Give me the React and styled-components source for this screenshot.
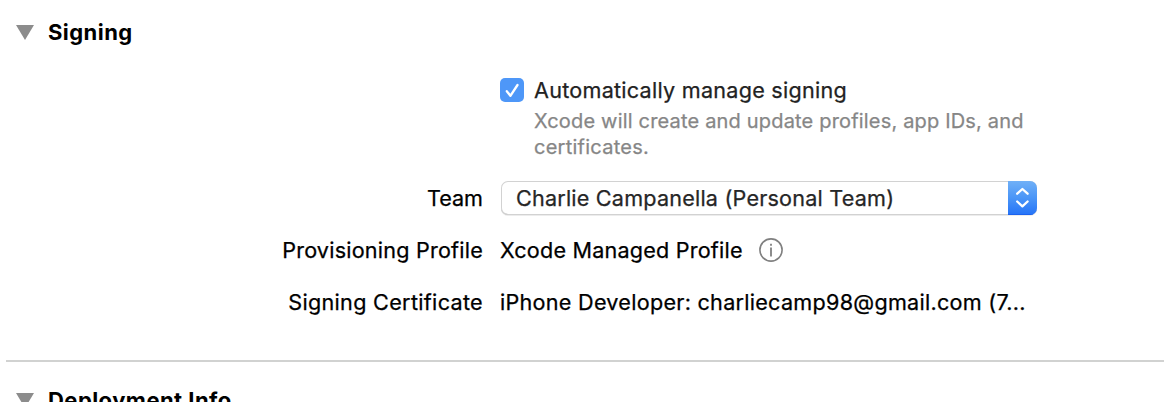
import React from "react";
import styled, { createGlobalStyle } from "styled-components";

const GlobalStyle = createGlobalStyle`
  * { box-sizing: border-box; }
  html, body { margin: 0; height: 402px; overflow: hidden; background: #fff; }
  body { font-family: Inter, "Liberation Sans", sans-serif; font-size: 21.6px; line-height: 26px; color: #000; }
`;

const Panel = styled.main`
  height: 402px;
  overflow: hidden;
  padding-left: 6px;
`;

const Header = styled.header`
  display: flex;
  align-items: center;
  gap: 14px;
  height: 26px;
  margin: ${(p) => p.$top}px 0 0 10px;
`;

const Title = styled.h2`
  margin: 0;
  font-size: 22px;
  font-weight: 700;
  line-height: 26px;
  white-space: nowrap;
  letter-spacing: 0.45px;
`;

const Disclosure = styled.svg`
  width: 18px;
  height: 15px;
  flex: none;
  fill: #8c8c8c;
`;

const Text = styled.span`
  display: block;
  white-space: nowrap;
  -webkit-text-stroke: 0.25px currentColor;
  color: ${(p) => p.$color || "#000"};
  letter-spacing: ${(p) => p.$tracking || 0}px;
`;

const Form = styled.div`
  padding: 32px 0;
`;

const AutoRow = styled.div`
  display: flex;
  gap: 10px;
  padding-left: 494px;
  margin-bottom: 12px;
`;

const Checkbox = styled.span`
  display: flex;
  width: 24px;
  height: 24px;
  margin-top: 1px;
  border-radius: 5px;
  background: #4e97f8;
`;

const Hint = styled.div`
  margin-top: 5px;
  font-size: 20px;
`;

const Row = styled.div`
  display: grid;
  grid-template-columns: 477px 537px;
  column-gap: 17px;
  align-items: center;
  height: 52px;
`;

const Label = styled.div`
  display: flex;
  justify-content: flex-end;
`;

const Value = styled.div`
  display: flex;
  align-items: center;
  gap: 16px;
`;

const Select = styled.div`
  display: flex;
  flex: 1;
  justify-content: space-between;
  align-items: center;
  height: 34px;
  margin-left: 1px;
  padding-left: 15px;
  border-radius: 7px;
  background: #fff;
  box-shadow: inset 0 0 0 1px #d2d2d2, inset 0 -1px 0 #b9b9b9, 0 1px 0 #ececec;
  overflow: hidden;
`;

const Stepper = styled.span`
  display: flex;
  width: 29px;
  height: 34px;
  background: linear-gradient(#70b0f7, #4a95f7 50%, #2573f8);
  box-shadow: inset 0 -1px 0 #1c62ee;
`;

const Divider = styled.hr`
  height: 2px;
  margin: 0;
  border: 0;
  background: #d1d2d1;
`;

function Section({ title, top }) {
  return (
    <Header $top={top}>
      <Disclosure viewBox="0 0 18 15"><path d="M0 0H18L9 15Z" /></Disclosure>
      <Title>{title}</Title>
    </Header>
  );
}

export default function App() {
  return (
    <Panel>
      <GlobalStyle />
      <Section title="Signing" top={19} />
      <Form>
        <AutoRow>
          <Checkbox>
            <svg width="24" height="24" viewBox="0 0 24 24" fill="none" stroke="#fff" strokeWidth="2.3" strokeLinecap="round" strokeLinejoin="round">
              <path d="M6.8 13.2L10.4 17.8L17.5 7" />
            </svg>
          </Checkbox>
          <div>
            <Text $color="#222" $tracking={0.25}>Automatically manage signing</Text>
            <Hint>
              <Text $color="#868686" $tracking={0.18}>Xcode will create and update profiles, app IDs, and</Text>
              <Text $color="#868686" $tracking={0.25}>certificates.</Text>
            </Hint>
          </div>
        </AutoRow>
        <Row>
          <Label><Text>Team</Text></Label>
          <Value>
            <Select>
              <Text $color="#262626" $tracking={0.2}>Charlie Campanella (Personal Team)</Text>
              <Stepper>
                <svg width="29" height="34" viewBox="0 0 29 34" fill="none" stroke="#fff" strokeWidth="2.3" strokeLinecap="round" strokeLinejoin="round">
                  <path d="M9.2 12.7L14.4 8L19.6 12.7M9.2 20.5L14.4 25.3L19.6 20.5" />
                </svg>
              </Stepper>
            </Select>
          </Value>
        </Row>
        <Row>
          <Label><Text $tracking={0.21}>Provisioning Profile</Text></Label>
          <Value>
            <Text $tracking={0.2}>Xcode Managed Profile</Text>
            <svg width="24" height="24" viewBox="0 0 24 24" fill="none" stroke="#808080">
              <circle cx="12" cy="12" r="11.1" strokeWidth="1.6" />
              <path d="M12 9.5V18.5M12 5.7V7.7" strokeWidth="1.8" />
            </svg>
          </Value>
        </Row>
        <Row>
          <Label><Text $tracking={0.31}>Signing Certificate</Text></Label>
          <Value><Text $tracking={0.27}>iPhone Developer: charliecamp98@gmail.com (7...</Text></Value>
        </Row>
      </Form>
      <Divider />
      <Section title="Deployment Info" top={25} />
    </Panel>
  );
}
